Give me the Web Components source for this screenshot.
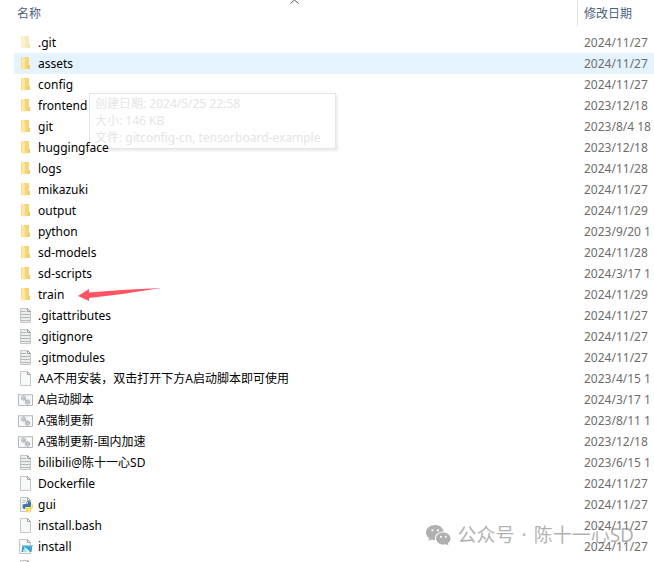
<!DOCTYPE html>
<html lang="zh-CN">
<head>
<meta charset="utf-8">
<title>文件列表</title>
<style>
html, body { margin: 0; height: 100%; overflow: hidden; background: #fff; }
body { font: 12px/21px "Noto Sans", "Noto Sans CJK SC", sans-serif; color: #000; }
</style>
</head>
<body>
<file-window>
  <file-table></file-table>
  <hover-tip slot="tip"><div>创建日期: 2024/5/25 22:58</div><div>大小: 146 KB</div><div>文件: gitconfig-cn, tensorboard-example</div></hover-tip>
  <pointer-arrow slot="arrow"></pointer-arrow>
  <account-mark slot="mark"><span>公众号</span><span>·</span><span>陈十一心SD</span></account-mark>
</file-window>
<script>
const define = (name, html, setup) => {
  const template = document.createElement('template');
  template.innerHTML = html;
  customElements.define(name, class extends HTMLElement {
    constructor() {
      super();
      this.attachShadow({ mode: 'open' }).append(template.content.cloneNode(true));
    }
    connectedCallback() { if (setup) setup(this, this.shadowRoot); }
  });
};

const page = `<path d="M2.500.5h7l3 3v11h-10z" fill="#f7f8f8" stroke="#c3c6c6"/><path d="M9.500.5v3h3z" fill="#fff" stroke="#a3a6a6"/>`;
const glyphs = {
  folder: `<path d="M6 1h5v8h1v4H6z" fill="#f6d57a"/><path d="M10 9h2v4h-2z" fill="#f2cb66"/><path d="M3 1h2l2 2v11l-4-1z" fill="#ffe7a3"/><path d="M3 1h1v12H3z" fill="#f9dc8b"/>`,
  text: `<path d="M2.500.5h7l3 3v11h-10z" fill="#eceded" stroke="#c3c6c6"/><path d="M9.500.5v3h3z" fill="#fff" stroke="#999c9c"/><path d="M3 3.500h5M3 6.500h9M3 9.500h9M3 12.500h9" stroke="#b4b7b7"/>`,
  page,
  script: `<path d="M.5 2.500h14v11H.5z" fill="#f7f8f8" stroke="#b5b8b8"/><path d="M1 3h13" stroke="#d5d8d8"/><circle cx="5.500" cy="6" r="2" fill="#cdd3d7" stroke="#b3bac0" stroke-width="1.500" stroke-dasharray="1.500 .5"/><circle cx="9.500" cy="10" r="2" fill="#cdd3d7" stroke="#adb5bb" stroke-width="1.500" stroke-dasharray="1.500 .5"/><path d="M5.500 6l4 4" stroke="#a5aeb5"/>`,
  python: `${page}<path d="M4 3.500h4M4 5.500h3M4 7.500h2" stroke="#bfc2c2"/><path d="M8 6q0-2 2.500-2T13 6v3q0 1-1 1H8.500Q7 10 7 12H6q-1.500 0-1.500-2.500T7 7h3V6.500H8z" fill="#3c78aa"/><path d="M13.500 7q1.800 0 1.800 2.500T13 12h-3v.6h2.500V14q0 1.500-2.500 1.500T7.500 14v-2q0-1.500 1.500-1.500h3q1.500 0 1.500-1.500z" fill="#ffd548"/><circle cx="9.300" cy="5.300" r=".6" fill="#fff"/><circle cx="11.300" cy="14.200" r=".6" fill="#fff"/>`,
  shell: `<path d="M1.500.5h8l3 3v11h-11z" fill="#f6f7f7" stroke="#c3c6c6"/><path d="M9.500.5v3h3z" fill="#fff" stroke="#aaa"/><path d="M4.500 6h10l-1 7H3.500z" fill="#3ba3cb"/><path d="M4.500 6h10v1.300H4.300z" fill="#93cddd"/><path d="M5 13l4-4 3 4z" fill="#a9e1ef"/><path d="M6 8.500l2 1.500-3 2M8.500 12H11" fill="none" stroke="#fff"/>`
};

define('file-icon', `<style>:host{display:block;flex:none;width:16px;height:16px}:host([faded]){opacity:.5}svg{display:block}</style><svg width="16" height="16" viewBox="0 0 16 16" aria-hidden="true"></svg>`,
  (host, root) => { root.querySelector('svg').innerHTML = glyphs[host.getAttribute('kind')]; });

const files = [
  ['folder', '.git', '2024/11/27'], ['folder', 'assets', '2024/11/27'], ['folder', 'config', '2024/11/27'],
  ['folder', 'frontend', '2023/12/18'], ['folder', 'git', '2023/8/4 18'], ['folder', 'huggingface', '2023/12/18'],
  ['folder', 'logs', '2024/11/28'], ['folder', 'mikazuki', '2024/11/27'], ['folder', 'output', '2024/11/29'],
  ['folder', 'python', '2023/9/20 1'], ['folder', 'sd-models', '2024/11/28'], ['folder', 'sd-scripts', '2024/3/17 1'],
  ['folder', 'train', '2024/11/29'], ['text', '.gitattributes', '2024/11/27'], ['text', '.gitignore', '2024/11/27'],
  ['text', '.gitmodules', '2024/11/27'], ['page', 'AA不用安装，双击打开下方A启动脚本即可使用', '2023/4/15 1'],
  ['script', 'A启动脚本', '2024/3/17 1'], ['script', 'A强制更新', '2023/8/11 1'], ['script', 'A强制更新-国内加速', '2023/12/18'],
  ['text', 'bilibili@陈十一心SD', '2023/6/15 1'], ['page', 'Dockerfile', '2024/11/27'], ['python', 'gui', '2024/11/27'],
  ['page', 'install.bash', '2024/11/27'], ['shell', 'install', '2024/11/27'], ['page', '', '']
];

define('file-table', `<style>
:host{display:block;position:relative;z-index:1;padding-left:14px}
table{width:100%;border-spacing:0;table-layout:fixed}
th,td{padding:0;text-align:left;white-space:nowrap;overflow:hidden;font-weight:400}
th{height:26px;color:#4c607a}
th:first-child{padding-left:3px}
.date{box-sizing:border-box;width:77px;padding-left:7px}
th.date{padding-left:6px;border-left:1px solid #e2e2e2}
td{height:21px}
td.date{color:#6d6d6d}
tbody::before{content:"";display:table-row;height:6px}
tr.hover td{background:#e5f3ff}
.name{display:flex;align-items:center;gap:4px;height:21px;padding-left:4px}
.sort{position:absolute;left:290px;top:0}
</style>
<table><thead><tr><th scope="col">名称</th><th scope="col" class="date">修改日期</th></tr></thead><tbody></tbody></table>
<svg class="sort" width="9" height="4" viewBox="0 0 9 4" aria-hidden="true"><path d="M.5 3.500L4.500 0l4 3.500" fill="none" stroke="#555"/></svg>`,
  (host, root) => {
    const body = root.querySelector('tbody');
    files.forEach(([kind, name, date], i) => {
      const row = body.insertRow();
      if (i === 1) row.className = 'hover';
      const line = document.createElement('div');
      line.className = 'name';
      const icon = document.createElement('file-icon');
      icon.setAttribute('kind', kind);
      if (i === 0) icon.setAttribute('faded', '');
      const label = document.createElement('span');
      label.textContent = name;
      line.append(icon, label);
      row.insertCell().append(line);
      const cell = row.insertCell();
      cell.className = 'date';
      cell.textContent = date;
    });
  });

define('hover-tip', `<style>:host{display:block;padding:1px 15px 2px 5px;border:1px solid #e6e6e6;background:#fff;box-shadow:2px 2px 2px #ececec;color:#e4e4e4;line-height:17px;white-space:nowrap}</style><slot></slot>`);

define('pointer-arrow', `<style>:host{display:block}svg{display:block}</style><svg width="84" height="14" viewBox="0 0 84 14" aria-hidden="true"><path d="M0 8L11 1V4.500Q48 1 83 0Q48 6 11 10V13z" fill="#ff5361"/></svg>`);

define('account-mark', `<style>:host{display:flex;align-items:center;gap:7px;color:rgba(110,110,110,.55);font-size:19px;line-height:24px;white-space:nowrap}svg{display:block}</style>
<svg width="25" height="21" viewBox="0 0 25 21" aria-hidden="true"><path d="M9 0C4 0 0 3.300 0 7.500 0 10 1.300 12 3.300 13.300L2.500 16l3.300-1.600q1.600.5 3.400.5-.5-1.200-.2-2.500C9.600 9 13 6.600 17.800 6.600 17 2.800 13.500 0 9 0z" fill="#b0b0b0"/><path d="M17.300 7.600c-4 0-7.300 2.600-7.300 6s3.300 6 7.300 6q1.500 0 2.700-.4l2.500 1.400-.6-2.300c1.600-1.100 2.600-2.800 2.600-4.700 0-3.400-3.200-6-7.300-6z" fill="#b0b0b0"/><g fill="#fff"><circle cx="6.300" cy="5.300" r="1.100"/><circle cx="12" cy="5.300" r="1.100"/><circle cx="15" cy="11.800" r="1"/><circle cx="19.700" cy="11.800" r="1"/></g></svg><slot></slot>`);

define('file-window', `<style>
:host{display:block;position:relative;height:100vh;overflow:hidden}
slot[name]::slotted(*){position:absolute}
slot[name=tip]::slotted(*){left:89px;top:93px}
slot[name=arrow]::slotted(*){left:78px;top:288px;z-index:2}
slot[name=mark]::slotted(*){right:20px;bottom:15px;z-index:2}
</style><slot></slot><slot name="tip"></slot><slot name="arrow"></slot><slot name="mark"></slot>`);
</script>
</body>
</html>
